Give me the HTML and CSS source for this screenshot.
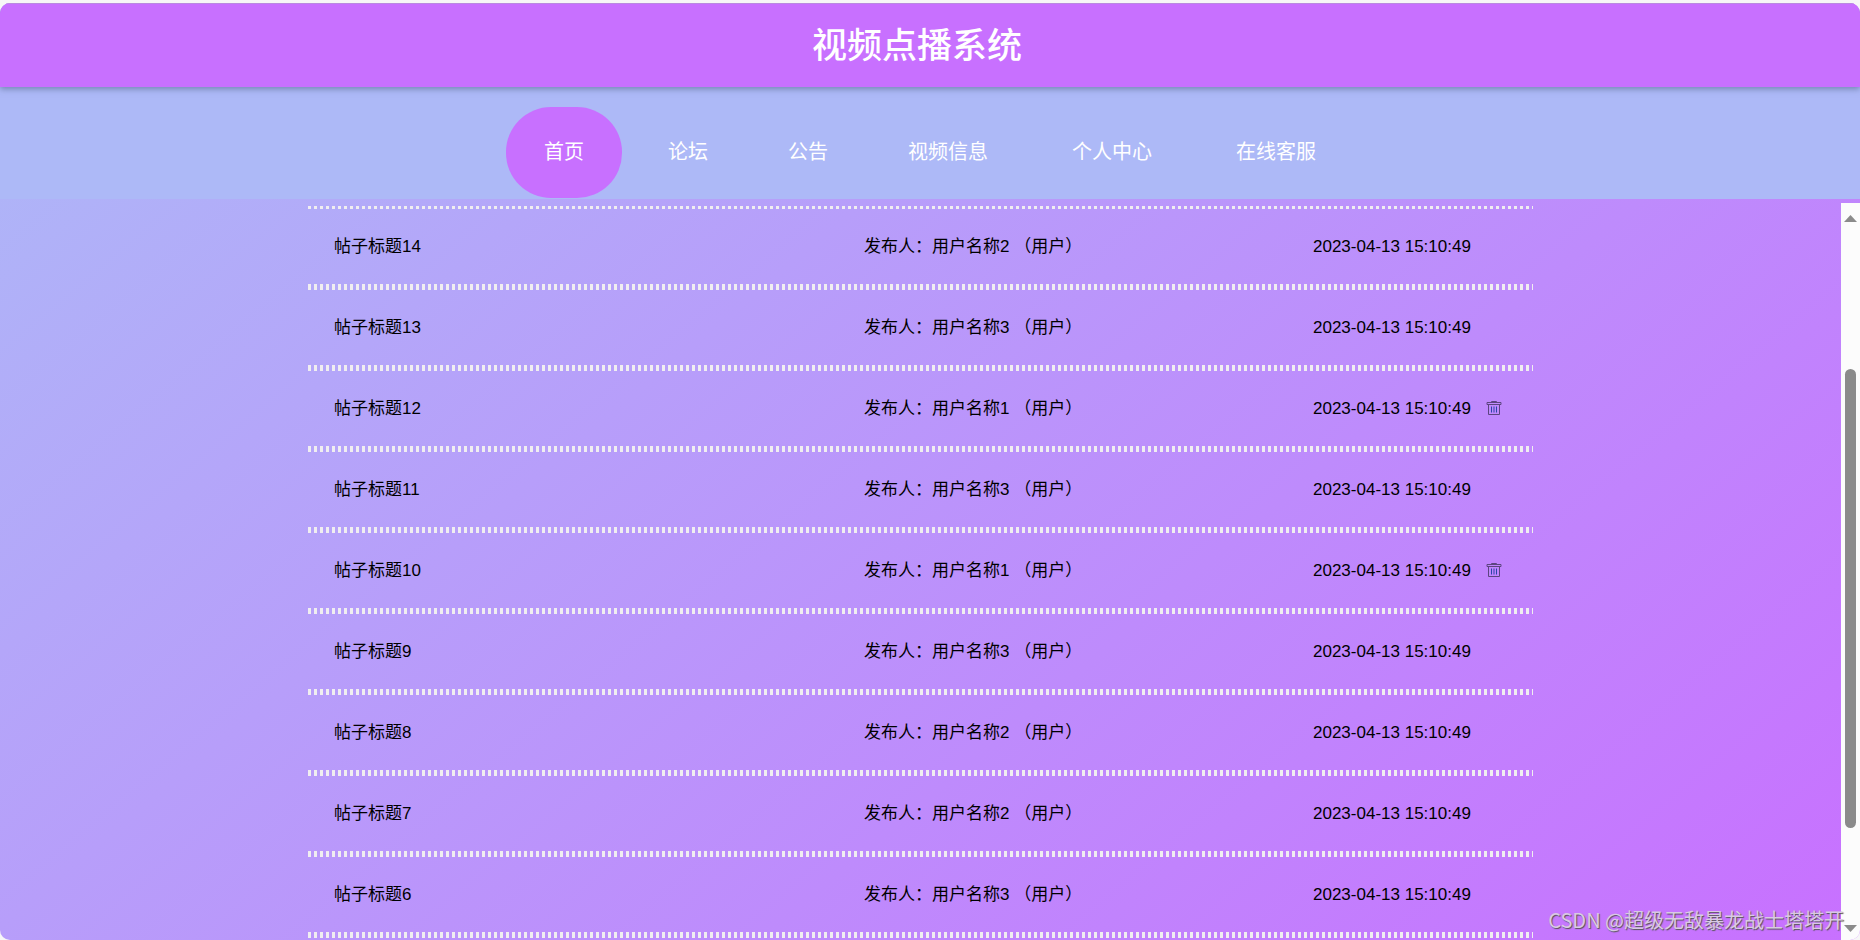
FILE: index.html
```html
<!DOCTYPE html>
<html lang="zh-CN">
<head>
<meta charset="utf-8">
<title>视频点播系统</title>
<link rel="stylesheet" href="styles.css">
</head>
<body>
<div class="window">
  <header class="banner"><h1 class="banner-title">视频点播系统</h1></header>
  <nav class="nav">
    <a class="nav-link active" href="#">首页</a>
    <a class="nav-link" href="#">论坛</a>
    <a class="nav-link" href="#">公告</a>
    <a class="nav-link wide" href="#">视频信息</a>
    <a class="nav-link wide" href="#">个人中心</a>
    <a class="nav-link wide" href="#">在线客服</a>
  </nav>
  <div class="content">
    <main class="pane">
      <ul class="posts">
        <li class="post"><span>帖子标题14</span><span>发布人：用户名称2 （用户）</span><time>2023-04-13 15:10:49</time></li>
        <li class="post"><span>帖子标题13</span><span>发布人：用户名称3 （用户）</span><time>2023-04-13 15:10:49</time></li>
        <li class="post"><span>帖子标题12</span><span>发布人：用户名称1 （用户）</span><time>2023-04-13 15:10:49</time><button class="delete" aria-label="删除"><svg viewBox="0 0 16 16"><path d="M5.500 1V.5h5V1M1 1.500h14v2H1zM2.500 4v9.500h11V4"/><path class="bars" d="M5.500 5.500v6M8 5.500v6M10.500 5.500v6"/></svg></button></li>
        <li class="post"><span>帖子标题11</span><span>发布人：用户名称3 （用户）</span><time>2023-04-13 15:10:49</time></li>
        <li class="post"><span>帖子标题10</span><span>发布人：用户名称1 （用户）</span><time>2023-04-13 15:10:49</time><button class="delete" aria-label="删除"><svg viewBox="0 0 16 16"><path d="M5.500 1V.5h5V1M1 1.500h14v2H1zM2.500 4v9.500h11V4"/><path class="bars" d="M5.500 5.500v6M8 5.500v6M10.500 5.500v6"/></svg></button></li>
        <li class="post"><span>帖子标题9</span><span>发布人：用户名称3 （用户）</span><time>2023-04-13 15:10:49</time></li>
        <li class="post"><span>帖子标题8</span><span>发布人：用户名称2 （用户）</span><time>2023-04-13 15:10:49</time></li>
        <li class="post"><span>帖子标题7</span><span>发布人：用户名称2 （用户）</span><time>2023-04-13 15:10:49</time></li>
        <li class="post"><span>帖子标题6</span><span>发布人：用户名称3 （用户）</span><time>2023-04-13 15:10:49</time></li>
      </ul>
    </main>
    <div class="scrollbar" aria-hidden="true">
      <svg class="arrow" viewBox="0 0 13 7"><path d="M0 7 6.500 0 13 7z"/></svg>
      <div class="track"><div class="thumb"></div></div>
      <svg class="arrow" viewBox="0 0 13 7"><path d="M0 0 6.500 7 13 0z"/></svg>
    </div>
  </div>
  <div class="watermark">CSDN @超级无敌暴龙战士塔塔开</div>
</div>
</body>
</html>
```
FILE: styles.css
```css
* { box-sizing: border-box; }
html, body { height: 100%; }
body {
  margin: 0;
  padding-top: 3px;
  background: #f7f7f7;
  font-family: "Liberation Sans", "Noto Sans CJK SC", sans-serif;
  color: #000;
}
.window {
  position: relative;
  height: 100%;
  display: flex;
  flex-direction: column;
  overflow: hidden;
  border-radius: 10px;
  background: linear-gradient(140deg, #adb9f7, #c870ff);
}
.banner {
  position: relative;
  flex: none;
  height: 84px;
  display: flex;
  align-items: center;
  justify-content: center;
  padding-right: 26px;
  border-top: 1px solid #b98ae0;
  background: #c870ff;
  box-shadow: 0 2px 6px rgba(60, 80, 110, 0.5);
}
.banner-title {
  margin: 0;
  font-size: 35px;
  line-height: 48px;
  font-weight: 500;
  color: #fff;
}
.nav {
  flex: none;
  height: 112px;
  display: flex;
  align-items: flex-end;
  justify-content: center;
  padding: 0 0 1px 6px;
  background: #adb9f7;
}
.nav-link {
  padding: 0 40px;
  border-radius: 45px;
  font-size: 20px;
  line-height: 91px;
  color: #fff;
  text-decoration: none;
}
.nav-link.wide { padding-right: 44px; }
.nav-link.active { margin-right: 6px; padding: 0 38px; background: #c870ff; }
.content { flex: 1; min-height: 0; display: flex; }
.pane { flex: 1; overflow: hidden; padding-top: 7px; }
.posts {
  --dots: repeating-linear-gradient(90deg, #f0eef0 0 3px, transparent 3px 6px);
  width: 1225px;
  max-width: 100%;
  margin: 0 auto;
  padding: 0;
  list-style: none;
}
.posts::after {
  content: "";
  display: block;
  height: 3px;
  background: var(--dots);
}
.post {
  height: 81px;
  display: grid;
  grid-template-columns: 530px 449px auto 1fr;
  align-items: center;
  padding: 0 26px;
  font-size: 17px;
  line-height: 24px;
  background:
    var(--dots) top / 100% 3px no-repeat,
    var(--dots) bottom / 100% 3px no-repeat;
}
.delete { width: 16px; height: 16px; margin-left: 15px; padding: 0; border: 0; background: none; }
.delete svg { display: block; width: 16px; height: 16px; fill: none; stroke: #5c4580; }
.delete .bars { stroke: #2b45a8; }
.scrollbar {
  flex: none;
  width: 19px;
  margin-top: 4px;
  padding: 12px 3px 8px;
  display: flex;
  flex-direction: column;
  align-items: center;
  background: #fcfcfc;
}
.arrow { width: 13px; height: 7px; fill: #8b8b8b; }
.track { flex: 1; width: 11px; padding: 147px 0 97px; }
.thumb { height: 100%; border-radius: 6px; background: #8b8b8b; }
.watermark {
  position: absolute;
  right: 16px;
  bottom: 6px;
  font-family: "Noto Sans CJK SC", sans-serif;
  font-size: 20px;
  line-height: 28px;
  color: #d9c9e4;
  text-shadow: 1px 1px 1px #555;
}
```
